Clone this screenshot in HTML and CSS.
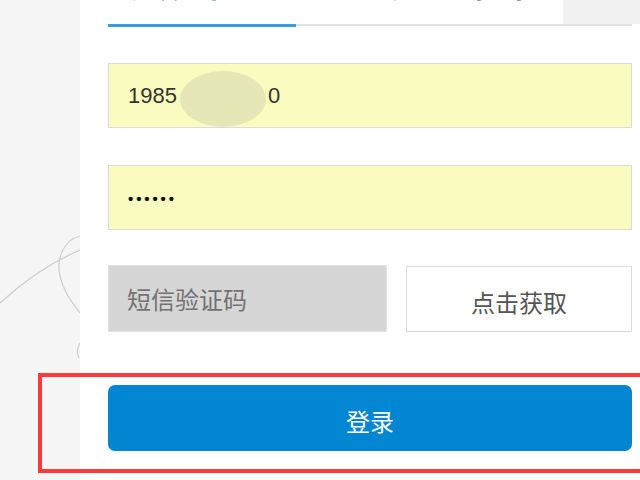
FILE: index.html
```html
<!DOCTYPE html>
<html lang="zh-CN">
<head>
<meta charset="utf-8">
<title>登录</title>
<link rel="stylesheet" href="styles.css">
</head>
<body>
<div class="page">
  <aside class="side">
    <svg class="deco" width="80" height="480" viewBox="0 0 80 480">
      <path d="M0 303 Q38 268 80 250" />
      <path d="M80 236 C64 240 56 258 60 276 C63 291 72 302 80 313" />
      <path d="M80 343 C77 348 77 354 79 358" />
    </svg>
  </aside>
  <main class="panel">
    <div class="corner"></div>
    <div class="tabs">
      <div class="tab active"><span class="tab-label">用户名登录</span></div>
      <div class="tab"><span class="tab-label">手机验证码登录</span></div>
    </div>
    <div class="form">
      <div class="field filled"><span>1985</span><span class="blur"></span><span>0</span></div>
      <div class="field filled"><span class="dots">••••••</span></div>
      <div class="sms-row">
        <div class="field sms"><span class="placeholder">短信验证码</span></div>
        <div class="get-code">点击获取</div>
      </div>
      <div class="login">登录</div>
    </div>
  </main>
</div>
<div class="highlight"></div>
</body>
</html>
```
FILE: styles.css
```css
html, body {
  margin: 0;
  padding: 0;
  width: 640px;
  height: 480px;
  overflow: hidden;
  background: #ffffff;
  font-family: "Liberation Sans", "Noto Sans CJK SC", sans-serif;
}

.page {
  display: flex;
  height: 480px;
}

.side {
  width: 80px;
  flex: none;
  background: #f5f5f5;
}

.deco {
  display: block;
}

.deco path {
  fill: none;
  stroke: #cdcdcd;
  stroke-width: 1.2;
}

.panel {
  flex: 1;
  background: #ffffff;
  padding: 0 8px 0 28px;
  position: relative;
}

.corner {
  position: absolute;
  top: 0;
  right: 0;
  width: 77px;
  height: 24px;
  background: #f1f1f1;
}

.tabs {
  display: flex;
  height: 24px;
  border-bottom: 2px solid #e2e2e2;
  font-family: "Noto Sans CJK SC", sans-serif;
  font-size: 24px;
  line-height: 24px;
}

.tab {
  color: #444;
  margin-bottom: -2px;
  border-bottom: 3px solid transparent;
  height: 24px;
}

.tab + .tab {
  margin-left: 69px;
}

.tab.active {
  width: 188px;
  color: #2b8fd8;
  border-bottom-color: #3a9be0;
}

.tab-label {
  display: block;
  margin-top: -24px;
  white-space: nowrap;
}

.form {
  display: flex;
  flex-direction: column;
  margin-top: 37px;
}

.field {
  box-sizing: border-box;
  height: 65px;
  border: 1px solid #dcdcdc;
  display: flex;
  align-items: center;
  padding-left: 19px;
  font-size: 22px;
  color: #333;
}

.field.filled {
  background: #fafcbf;
}

.field.filled + .field.filled {
  margin-top: 37px;
}

.blur {
  display: inline-block;
  width: 86px;
  height: 56px;
  margin: 6px 2px 0 3px;
  border-radius: 50%;
  background: #e5e8b6;
}

.dots {
  font-size: 15px;
  letter-spacing: 2.9px;
  color: #111;
  font-weight: bold;
  margin-top: 2px;
}

.sms-row {
  display: flex;
  gap: 19px;
  margin-top: 35px;
}

.field.sms {
  width: 279px;
  height: 67px;
  background: #d6d6d6;
  border-color: #e2e2e2;
  padding-left: 18px;
}

.placeholder {
  font-family: "Noto Sans CJK SC", sans-serif;
  font-size: 24px;
  color: #727272;
}

.get-code {
  box-sizing: border-box;
  flex: 1;
  height: 66px;
  margin-top: 1px;
  border: 1px solid #dcdcdc;
  background: #fff;
  display: flex;
  align-items: center;
  justify-content: center;
  font-family: "Noto Sans CJK SC", sans-serif;
  font-size: 24px;
  color: #555;
  padding-top: 4px;
}

.login {
  height: 66px;
  margin-top: 53px;
  border-radius: 7px;
  background: #0286d1;
  color: #fff;
  display: flex;
  align-items: center;
  justify-content: center;
  font-family: "Noto Sans CJK SC", sans-serif;
  font-size: 24px;
  padding-top: 4px;
  box-sizing: border-box;
}

.highlight {
  position: absolute;
  left: 38px;
  top: 373px;
  width: 620px;
  height: 100px;
  box-sizing: border-box;
  border: 4px solid #fb3b3b;
}
```
